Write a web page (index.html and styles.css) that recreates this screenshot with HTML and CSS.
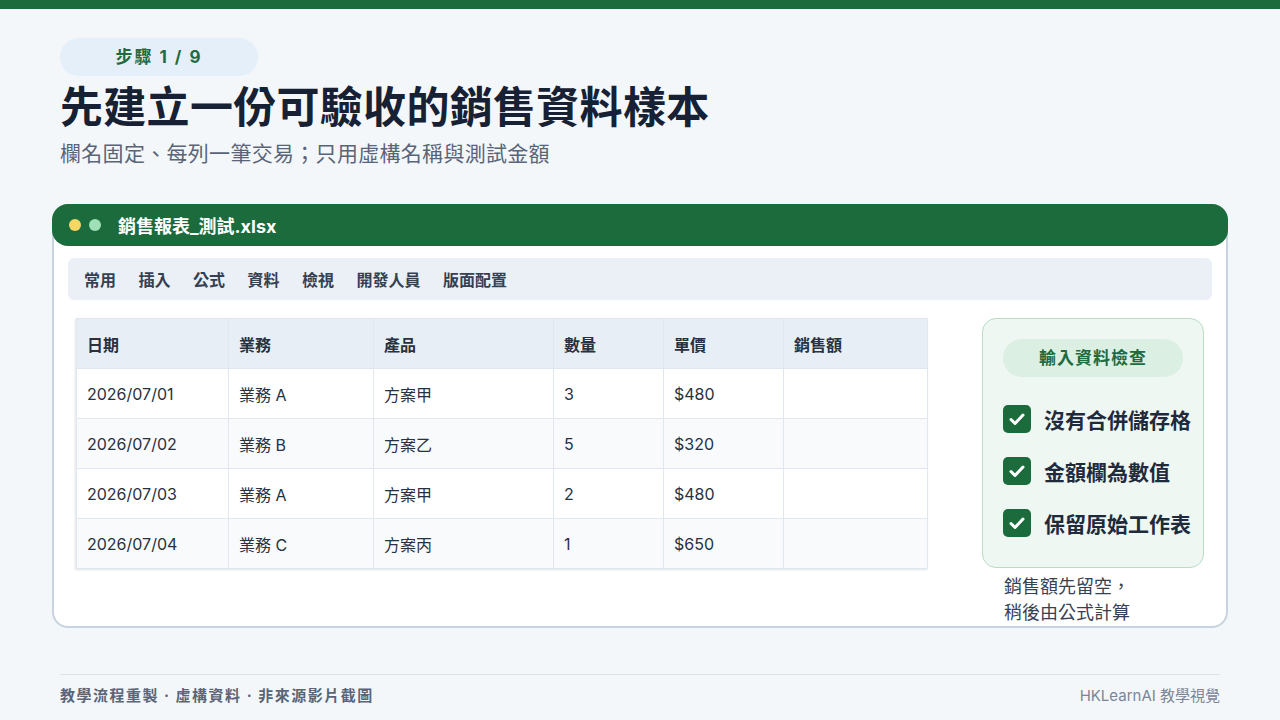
FILE: index.html
```html
<!DOCTYPE html>
<html lang="zh-Hant">
<head>
    <meta charset="UTF-8">
    <meta name="viewport" content="width=device-width, initial-scale=1.0">
    <title>步驟 1 / 9 - 銷售資料樣本</title>
    <link rel="stylesheet" href="styles.css">
</head>
<body>
    <div class="top-bar"></div>

    <div class="page">
        <div class="step-pill">步驟 1 / 9</div>
        <h1 class="title">先建立一份可驗收的銷售資料樣本</h1>
        <p class="subtitle">欄名固定、每列一筆交易；只用虛構名稱與測試金額</p>

        <!-- Spreadsheet window -->
        <div class="window">
            <div class="window-head">
                <span class="dot dot-yellow"></span>
                <span class="dot dot-green"></span>
                <span class="file-name">銷售報表_測試.xlsx</span>
            </div>

            <div class="ribbon">
                <span>常用</span>
                <span>插入</span>
                <span>公式</span>
                <span>資料</span>
                <span>檢視</span>
                <span>開發人員</span>
                <span>版面配置</span>
            </div>

            <div class="window-body">
                <table class="sheet">
                    <colgroup>
                        <col style="width: 152px">
                        <col style="width: 145px">
                        <col style="width: 180px">
                        <col style="width: 110px">
                        <col style="width: 120px">
                        <col>
                    </colgroup>
                    <thead>
                        <tr>
                            <th>日期</th>
                            <th>業務</th>
                            <th>產品</th>
                            <th>數量</th>
                            <th>單價</th>
                            <th>銷售額</th>
                        </tr>
                    </thead>
                    <tbody>
                        <tr>
                            <td>2026/07/01</td>
                            <td>業務 A</td>
                            <td>方案甲</td>
                            <td>3</td>
                            <td>$480</td>
                            <td></td>
                        </tr>
                        <tr>
                            <td>2026/07/02</td>
                            <td>業務 B</td>
                            <td>方案乙</td>
                            <td>5</td>
                            <td>$320</td>
                            <td></td>
                        </tr>
                        <tr>
                            <td>2026/07/03</td>
                            <td>業務 A</td>
                            <td>方案甲</td>
                            <td>2</td>
                            <td>$480</td>
                            <td></td>
                        </tr>
                        <tr>
                            <td>2026/07/04</td>
                            <td>業務 C</td>
                            <td>方案丙</td>
                            <td>1</td>
                            <td>$650</td>
                            <td></td>
                        </tr>
                    </tbody>
                </table>

                <div class="side">
                    <div class="check-panel">
                        <div class="check-title">輸入資料檢查</div>
                        <div class="check-item">
                            <span class="check-box"><svg viewBox="0 0 28 28" width="28" height="28"><path d="M8 14.5l4 4 8-8.5" fill="none" stroke="#fff" stroke-width="3" stroke-linecap="round" stroke-linejoin="round"/></svg></span>
                            沒有合併儲存格
                        </div>
                        <div class="check-item">
                            <span class="check-box"><svg viewBox="0 0 28 28" width="28" height="28"><path d="M8 14.5l4 4 8-8.5" fill="none" stroke="#fff" stroke-width="3" stroke-linecap="round" stroke-linejoin="round"/></svg></span>
                            金額欄為數值
                        </div>
                        <div class="check-item">
                            <span class="check-box"><svg viewBox="0 0 28 28" width="28" height="28"><path d="M8 14.5l4 4 8-8.5" fill="none" stroke="#fff" stroke-width="3" stroke-linecap="round" stroke-linejoin="round"/></svg></span>
                            保留原始工作表
                        </div>
                    </div>
                    <p class="note">銷售額先留空，<br>稍後由公式計算</p>
                </div>
            </div>
        </div>

        <div class="footer">
            <span class="footer-left">教學流程重製 · 虛構資料 · 非來源影片截圖</span>
            <span class="footer-right">HKLearnAI 教學視覺</span>
        </div>
    </div>
</body>
</html>
```

FILE: styles.css
```css
body {
    margin: 0;
    background: #f3f7fa;
    font-family: Inter, "Noto Sans CJK TC", sans-serif;
    color: #1b2436;
}
.top-bar {
    height: 9px;
    background: #1b6b3d;
}
.page {
    padding: 0 60px;
}
.step-pill {
    margin-top: 29px;
    width: 198px;
    height: 38px;
    line-height: 38px;
    border-radius: 19px;
    background: #e5effa;
    color: #1f6b40;
    font-size: 17px;
    font-weight: 700;
    text-align: center;
    letter-spacing: 2px;
}
.title {
    margin: 6px 0 0;
    font-size: 43px;
    line-height: 50px;
    font-weight: 700;
    letter-spacing: 0.3px;
    color: #172133;
}
.subtitle {
    margin: 7px 0 0;
    font-size: 21px;
    line-height: 30px;
    letter-spacing: 0.3px;
    color: #5a6478;
}

/* window */
.window {
    margin: 35px -8px 0;
    height: 424px;
    box-sizing: border-box;
    background: #fff;
    border: 2px solid #c9d3de;
    border-radius: 16px;
}
.window-head {
    margin: -2px -2px 0;
    height: 42px;
    padding-left: 17px;
    display: flex;
    align-items: center;
    gap: 8px;
    background: #1b6b3d;
    border-radius: 16px;
}
.dot {
    width: 12px;
    height: 12px;
    border-radius: 50%;
}
.dot-yellow {
    background: #f8d664;
}
.dot-green {
    background: #9fe0b8;
}
.file-name {
    margin-left: 9px;
    color: #fff;
    font-size: 18px;
    font-weight: 700;
}
.ribbon {
    margin: 12px 14px 0;
    height: 42px;
    padding-left: 16px;
    display: flex;
    align-items: center;
    gap: 22.5px;
    background: #eaf0f6;
    border-radius: 6px;
    font-size: 16px;
    font-weight: 600;
    color: #354053;
}
.window-body {
    margin-top: 18px;
    padding: 0 22px;
    display: flex;
    justify-content: space-between;
}

/* table */
.sheet {
    width: 852px;
    height: 250px;
    border-collapse: collapse;
    table-layout: fixed;
    font-size: 16px;
    color: #27313f;
    box-shadow: -1px 1px 2px rgba(30, 45, 70, 0.12);
}
.sheet th,
.sheet td {
    height: 49px;
    padding: 0 10px;
    text-align: left;
    border: 1px solid #e1e7ef;
}
.sheet th {
    background: #e8eef6;
    font-weight: 600;
}
.sheet tbody tr:nth-child(even) {
    background: #f8fafc;
}

/* checks */
.side {
    width: 222px;
}
.check-panel {
    height: 250px;
    box-sizing: border-box;
    padding: 20px 20px 0;
    background: #eef7f1;
    border: 1px solid #b9dcc5;
    border-radius: 14px;
}
.check-title {
    height: 38px;
    line-height: 38px;
    border-radius: 19px;
    background: #dcefe3;
    color: #1f6b40;
    font-size: 17px;
    font-weight: 700;
    letter-spacing: 1px;
    text-align: center;
}
.check-item {
    margin-top: 16px;
    height: 52px;
    display: flex;
    align-items: center;
    gap: 13px;
    font-size: 21px;
    font-weight: 700;
    color: #1f2a3c;
    white-space: nowrap;
}
.check-item + .check-item {
    margin-top: 0;
}
.check-box {
    width: 28px;
    height: 28px;
    border-radius: 5px;
    background: #1b6b3d;
    display: flex;
}
.note {
    margin: 6px 0 0 22px;
    font-size: 18px;
    line-height: 26px;
    color: #374153;
}

/* footer */
.footer {
    margin-top: 46px;
    padding-top: 11px;
    border-top: 1px solid #dde3ea;
    display: flex;
    justify-content: space-between;
    font-size: 15px;
    line-height: 20px;
}
.footer-left {
    font-weight: 700;
    letter-spacing: 1.5px;
    color: #5b6577;
}
.footer-right {
    color: #7b8597;
}
```
